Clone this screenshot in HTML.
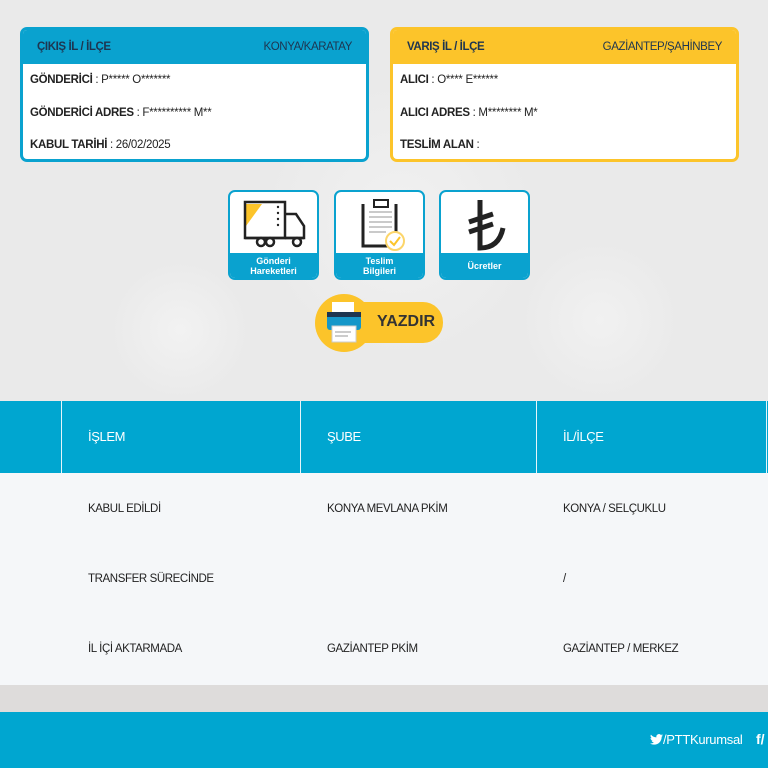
<!DOCTYPE html>
<html><head><meta charset="utf-8"><style>
*{margin:0;padding:0;box-sizing:border-box}
body{width:768px;height:768px;overflow:hidden;position:relative;font-family:"Liberation Sans",sans-serif;background:#ececec}
.bg{position:absolute;left:0;top:0;width:768px;height:401px;background:radial-gradient(circle at 180px 330px,#f2f2f2 0,transparent 70px),radial-gradient(circle at 600px 320px,#f1f1f1 0,transparent 80px),radial-gradient(circle at 400px 220px,#f1f1f1 0,transparent 140px),#eaeaea}
.card{position:absolute;top:27px;width:349px;height:135px;border:3px solid;border-radius:7px;background:#fff;overflow:hidden}
.card .h{height:34px;display:flex;justify-content:space-between;align-items:center;padding:0 14px;font-size:11.5px;color:#1e3550;font-weight:bold;letter-spacing:-0.4px}
.card .r{font-size:11.5px;color:#222;padding-left:7px;height:32.5px;line-height:32.5px;letter-spacing:-0.3px}
.c1{left:20px;border-color:#0aa2cf}.c1 .h{background:#0aa2cf}
.c2{left:390px;border-color:#fcc42a}.c2 .h{background:#fcc42a}
.ic{position:absolute;top:190px;width:91px;height:90px;border:2px solid #0aa2cf;border-radius:7px;background:#fff;overflow:hidden}
.ic .l{position:absolute;left:0;right:0;bottom:0;height:25px;background:#0aa2cf;color:#fff;font-weight:bold;font-size:9px;text-align:center;display:flex;align-items:center;justify-content:center;line-height:10px}
.ic svg{position:absolute;left:0;top:0}
.th{position:absolute;top:401px;left:0;width:768px;height:72px;background:#00a6d0}
.th div{position:absolute;top:0;height:72px;border-left:1px solid #e6f5fa;color:#fff;font-size:13px;line-height:72px;padding-left:26px;letter-spacing:-0.4px}
.tb{position:absolute;top:473px;left:0;width:768px;height:212px;background:#f5f7f9}
.tb span{position:absolute;font-size:11.5px;color:#222;letter-spacing:-0.4px}
.gr{position:absolute;top:685px;height:27px;width:768px;background:#dedcdb}
.ft{position:absolute;top:712px;height:56px;width:768px;background:#00a6d0;color:#fff;font-size:13px}
</style></head><body>
<div class="bg"></div>
<div class="card c1"><div class="h"><span>ÇIKIŞ İL / İLÇE</span><span style="font-weight:normal">KONYA/KARATAY</span></div>
<div class="r"><b>GÖNDERİCİ</b> : P***** O*******</div>
<div class="r"><b>GÖNDERİCİ ADRES</b> : F********** M**</div>
<div class="r"><b>KABUL TARİHİ</b> : 26/02/2025</div></div>
<div class="card c2"><div class="h"><span>VARIŞ İL / İLÇE</span><span style="font-weight:normal">GAZİANTEP/ŞAHİNBEY</span></div>
<div class="r"><b>ALICI</b> : O**** E******</div>
<div class="r"><b>ALICI ADRES</b> : M******** M*</div>
<div class="r"><b>TESLİM ALAN</b> :</div></div>

<div class="ic" style="left:228px"><svg width="91" height="64" viewBox="0 0 91 64">
<path d="M16 12 L32 12 L16 34Z" fill="#fcc42a"/>
<rect x="15" y="10" width="40" height="36" fill="none" stroke="#222" stroke-width="2.5"/>
<path d="M55 22 L66 22 L74 34 L74 46 L55 46" fill="none" stroke="#222" stroke-width="2.5"/>
<line x1="15" y1="46" x2="74" y2="46" stroke="#222" stroke-width="2.5"/>
<g fill="#222"><circle cx="48" cy="15" r="1.2"/><circle cx="48" cy="21" r="1.2"/><circle cx="48" cy="27" r="1.2"/><circle cx="48" cy="33" r="1.2"/></g>
<g fill="#fff" stroke="#222" stroke-width="2.5"><circle cx="31" cy="50" r="4"/><circle cx="40" cy="50" r="4"/><circle cx="67" cy="50" r="4"/></g></svg>
<div class="l">Gönderi<br>Hareketleri</div></div>
<div class="ic" style="left:334px"><svg width="91" height="64" viewBox="0 0 91 64">
<path d="M27 12 L27 54 L54 54" fill="none" stroke="#222" stroke-width="3"/>
<path d="M60 12 L60 44" fill="none" stroke="#222" stroke-width="3"/>
<rect x="38" y="8" width="14" height="7" fill="none" stroke="#222" stroke-width="2"/>
<g stroke="#aaa" stroke-width="1.2"><line x1="33" y1="20" x2="56" y2="20"/><line x1="33" y1="25" x2="56" y2="25"/><line x1="33" y1="30" x2="56" y2="30"/><line x1="33" y1="35" x2="56" y2="35"/><line x1="33" y1="40" x2="50" y2="40"/></g>
<circle cx="59" cy="49" r="9" fill="#fff" stroke="#fcd56a" stroke-width="2"/>
<path d="M54 49 L58 53 L64 45" fill="none" stroke="#fcc42a" stroke-width="2"/></svg>
<div class="l">Teslim<br>Bilgileri</div></div>
<div class="ic" style="left:439px"><svg width="91" height="64" viewBox="0 0 91 64">
<path d="M39 8 L39 56 Q58 56 62 36" fill="none" stroke="#222" stroke-width="5"/>
<path d="M28 30 L52 22 M28 40 L52 32" stroke="#222" stroke-width="5"/></svg>
<div class="l">Ücretler</div></div>

<div style="position:absolute;left:320px;top:302px;width:123px;height:41px;border-radius:20px;background:#fcc42a"></div>
<div style="position:absolute;left:315px;top:294px;width:58px;height:58px;border-radius:50%;background:#fcc42a"></div>
<svg style="position:absolute;left:315px;top:294px" width="58" height="58" viewBox="0 0 58 58">
<rect x="17" y="8" width="22" height="12" fill="#fff"/>
<rect x="12" y="18" width="34" height="18" rx="3" fill="#1597c9"/>
<rect x="12" y="18" width="34" height="5" fill="#1e3550"/>
<rect x="17" y="32" width="24" height="16" fill="#fff" stroke="#ccc" stroke-width="1"/>
<line x1="20" y1="38" x2="36" y2="38" stroke="#999"/><line x1="20" y1="42" x2="33" y2="42" stroke="#999"/></svg>
<div style="position:absolute;left:377px;top:313px;font-weight:bold;font-size:16px;color:#333">YAZDIR</div>

<div class="th"><div style="left:61px;width:240px">İŞLEM</div><div style="left:300px;width:237px">ŞUBE</div><div style="left:536px;width:230px">İL/İLÇE</div><div style="left:766px;width:10px"></div></div>
<div class="tb">
<span style="left:88px;top:30px">KABUL EDİLDİ</span><span style="left:327px;top:30px">KONYA MEVLANA PKİM</span><span style="left:563px;top:30px">KONYA / SELÇUKLU</span>
<span style="left:88px;top:100px">TRANSFER SÜRECİNDE</span><span style="left:563px;top:100px">/</span>
<span style="left:88px;top:170px">İL İÇİ AKTARMADA</span><span style="left:327px;top:170px">GAZİANTEP PKİM</span><span style="left:563px;top:170px">GAZİANTEP / MERKEZ</span>
</div>
<div class="gr"></div>
<div class="ft"><svg style="position:absolute;left:650px;top:22px" width="13" height="11" viewBox="0 0 24 20"><path fill="#fff" d="M24 2.4a10 10 0 0 1-2.8.8A5 5 0 0 0 23.3.4a10 10 0 0 1-3.1 1.2A4.9 4.9 0 0 0 11.8 6 14 14 0 0 1 1.7.9a4.9 4.9 0 0 0 1.5 6.6A4.9 4.9 0 0 1 1 6.9a4.9 4.9 0 0 0 3.9 4.9 5 5 0 0 1-2.2.1 4.9 4.9 0 0 0 4.6 3.4A9.9 9.9 0 0 1 0 17.3 14 14 0 0 0 7.5 19.5c9 0 14-7.5 14-14v-.6A10 10 0 0 0 24 2.4z"/></svg><span style="position:absolute;left:663px;top:20px;letter-spacing:-0.3px">/PTTKurumsal</span><span style="position:absolute;left:756px;top:19px;font-weight:bold;font-size:14px">f/</span></div>
</body></html>
